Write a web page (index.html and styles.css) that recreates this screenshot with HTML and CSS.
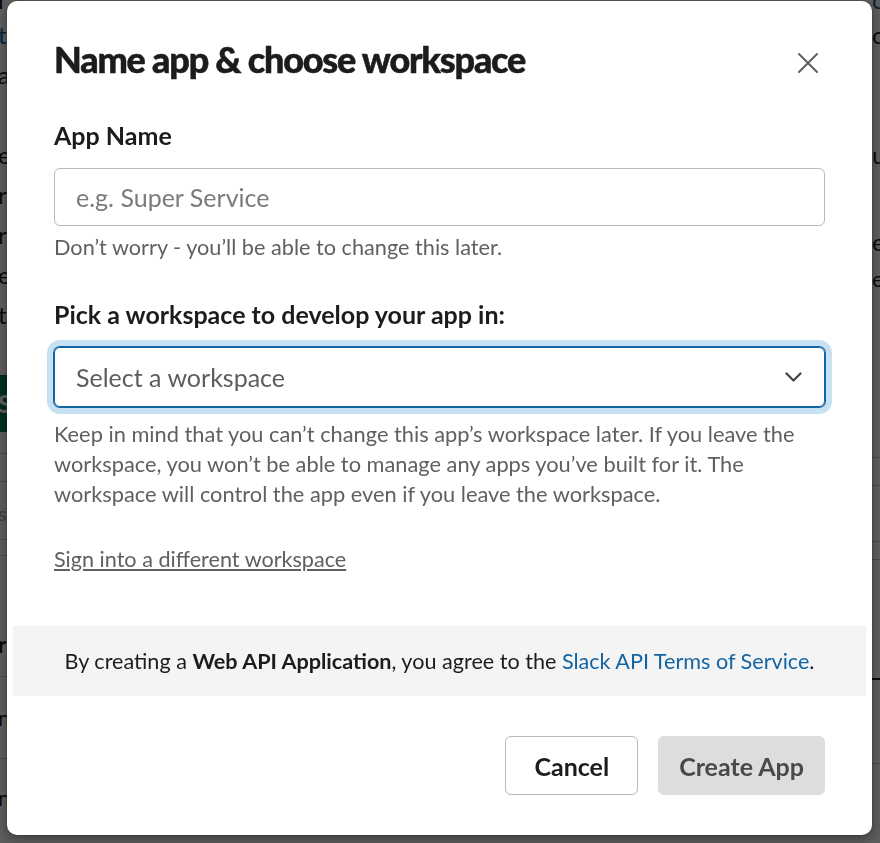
FILE: index.html
```html
<!DOCTYPE html>
<html lang="en">
<head>
    <meta charset="UTF-8">
    <meta name="viewport" content="width=device-width, initial-scale=1.0">
    <title>Create an app</title>
    <link rel="stylesheet" href="styles.css">
</head>
<body>
    <!-- app page behind the dialog, only its edges show -->
    <div class="page">
        <div class="edge edge-left">
            <div class="bg-top">l</div>
            <div class="bg-line bg-link">t</div>
            <div class="bg-line">a</div>
            <div class="bg-line"></div>
            <div class="bg-line">e</div>
            <div class="bg-line">r</div>
            <div class="bg-line">r</div>
            <div class="bg-line">e</div>
            <div class="bg-line">t</div>
            <div class="bg-space-40"></div>
            <div class="bg-button">S</div>
            <div class="bg-cell bg-h22"></div>
            <div class="bg-cell bg-h28"></div>
            <div class="bg-cell bg-h58 bg-muted">s</div>
            <div class="bg-cell bg-h16"></div>
            <div class="bg-space-72"></div>
            <div class="bg-line-sm bg-bold">r</div>
            <div class="bg-cell bg-h15"></div>
            <div class="bg-space-24"></div>
            <div class="bg-line-sm">n</div>
            <div class="bg-cell bg-h24"></div>
            <div class="bg-space-22"></div>
            <div class="bg-line-sm">n</div>
        </div>
        <div class="edge edge-right">
            <div class="bg-top bg-link">c</div>
            <div class="bg-line">c</div>
            <div class="bg-line"></div>
            <div class="bg-line"></div>
            <div class="bg-line">u</div>
            <div class="bg-space-47"></div>
            <div class="bg-line">e</div>
            <div class="bg-line-sm">e</div>
            <div class="bg-space-130"></div>
            <div class="bg-cell bg-h32"></div>
            <div class="bg-cell bg-h28"></div>
            <div class="bg-cell bg-h56"></div>
            <div class="bg-cell bg-h18"></div>
            <div class="bg-cell bg-h120 bg-cell-dark"></div>
            <div class="bg-cell bg-h84"></div>
        </div>
    </div>

    <div class="overlay">
        <div class="modal" role="dialog" aria-labelledby="modal-title">
            <div class="modal-header">
                <h1 class="modal-title" id="modal-title">Name app &amp; choose workspace</h1>
                <button class="close-btn" aria-label="Close">
                    <svg width="22" height="22" viewBox="0 0 22 22" fill="none" stroke="currentColor" stroke-width="2" stroke-linecap="round">
                        <path d="M2 2l18 18M20 2L2 20"/>
                    </svg>
                </button>
            </div>

            <div class="modal-body">
                <label class="field-label" for="app-name">App Name</label>
                <input class="text-input" id="app-name" type="text" placeholder="e.g. Super Service">
                <p class="field-hint">Don’t worry - you’ll be able to change this later.</p>

                <label class="field-label field-label-select">Pick a workspace to develop your app in:</label>
                <div class="select is-focused" tabindex="0">
                    <span>Select a workspace</span>
                    <svg width="17" height="10" viewBox="0 0 17 10" fill="none" stroke="currentColor" stroke-width="2.2" stroke-linecap="round" stroke-linejoin="round">
                        <path d="M1.5 1.5l7 7 7-7"/>
                    </svg>
                </div>
                <p class="field-note">Keep in mind that you can’t change this app’s workspace later. If you leave the workspace, you won’t be able to manage any apps you’ve built for it. The workspace will control the app even if you leave the workspace.</p>

                <a class="alt-link" href="#">Sign into a different workspace</a>
            </div>

            <div class="terms">
                By creating a <strong>Web API Application</strong>, you agree to the <a href="#">Slack API Terms of Service</a>.
            </div>

            <div class="modal-footer">
                <button class="btn btn-cancel">Cancel</button>
                <button class="btn btn-primary" disabled>Create App</button>
            </div>
        </div>
    </div>
</body>
</html>
```

FILE: styles.css
```css
* {
    box-sizing: border-box;
}
body {
    margin: 0;
    font-family: Lato, "Noto Sans", Arial, sans-serif;
    color: #1d1c1d;
    background: #fff;
}

/* page behind the overlay */
.page {
    display: flex;
    justify-content: space-between;
    height: 843px;
    overflow: hidden;
}
.edge {
    width: 9px;
    overflow: hidden;
    font-size: 24px;
    white-space: nowrap;
}
.edge-left {
    margin-left: -2px;
}
.edge-right {
    width: 8px;
}
.bg-top {
    height: 15px;
    line-height: 0;
}
.bg-line {
    height: 40px;
    line-height: 40px;
}
.bg-line-sm {
    height: 34px;
    line-height: 34px;
    font-size: 22px;
}
.bg-link {
    color: #1264a3;
}
.bg-muted {
    color: #aaa;
}
.bg-bold {
    font-weight: 700;
}
.bg-button {
    height: 57px;
    background: #007a5a;
    color: #fff;
    font-weight: 700;
    line-height: 57px;
}
.bg-cell {
    border-bottom: 1px solid #c8c8c8;
    font-size: 20px;
}
.bg-cell-dark {
    border-bottom: 2px solid #1d1c1d;
}
.bg-h15 { height: 15px; }
.bg-h16 { height: 16px; }
.bg-h18 { height: 18px; }
.bg-h22 { height: 22px; }
.bg-h24 { height: 24px; }
.bg-h28 { height: 28px; }
.bg-h32 { height: 32px; }
.bg-h56 { height: 56px; }
.bg-h58 { height: 58px; line-height: 62px; }
.bg-h84 { height: 84px; }
.bg-h120 { height: 120px; }
.bg-space-22 { height: 22px; }
.bg-space-24 { height: 24px; }
.bg-space-40 { height: 40px; }
.bg-space-47 { height: 47px; }
.bg-space-72 { height: 72px; }
.bg-space-130 { height: 130px; }

/* dialog */
.overlay {
    position: fixed;
    inset: 0;
    display: flex;
    align-items: flex-start;
    padding: 1px 0 0 7px;
    background: rgba(0, 0, 0, 0.64);
}
.modal {
    width: 865px;
    height: 834px;
    background: #fff;
    border-radius: 10px;
    box-shadow: 0 0 0 1px rgba(29, 28, 29, 0.13), 0 4px 12px rgba(0, 0, 0, 0.35);
}
.modal-header {
    display: flex;
    align-items: center;
    justify-content: space-between;
    padding: 36px 47px 0 47px;
}
.modal-title {
    margin: 0;
    font-size: 36px;
    font-weight: 900;
    line-height: 44px;
    letter-spacing: -1.2px;
    -webkit-text-stroke: 0.5px #1d1c1d;
}
.close-btn {
    display: flex;
    padding: 0;
    margin-right: 6px;
    margin-top: 7px;
    border: none;
    background: none;
    color: #616061;
    cursor: pointer;
}

.modal-body {
    padding: 0 47px;
}
.field-label {
    display: block;
    margin-top: 39px;
    font-size: 25px;
    font-weight: 700;
    line-height: 30px;
}
.field-label-select {
    margin-top: 37px;
}
.text-input {
    display: block;
    width: 100%;
    height: 58px;
    margin-top: 18px;
    padding: 0 21px;
    border: 1px solid #bbbabb;
    border-radius: 6px;
    font-family: inherit;
    font-size: 25px;
    color: #1d1c1d;
    outline: none;
}
.text-input::placeholder {
    color: #7c7a7c;
}
.field-hint {
    margin: 6px 0 0;
    font-size: 21.7px;
    line-height: 30px;
    color: #616061;
}
.select {
    display: flex;
    align-items: center;
    justify-content: space-between;
    height: 60px;
    margin-top: 18px;
    padding: 0 22px 0 21px;
    border: 1px solid #1264a3;
    border-radius: 6px;
    font-size: 25px;
    color: #5e5d5e;
    outline: none;
}
.select.is-focused {
    box-shadow: 0 0 0 1px #1264a3, 0 0 0 7px #c5e1f2;
}
.select svg {
    color: #454245;
}
.field-note {
    margin: 12px 0 0;
    font-size: 21.8px;
    line-height: 30px;
    color: #616061;
}
.alt-link {
    display: block;
    width: fit-content;
    margin-top: 35px;
    font-size: 21.6px;
    line-height: 30px;
    color: #616061;
    text-decoration: underline;
}

.terms {
    height: 70px;
    margin: 52px 6px 0;
    background: #f4f4f4;
    font-size: 21.6px;
    line-height: 70px;
    text-align: center;
    color: #1d1c1d;
}
.terms strong {
    font-weight: 700;
}
.terms a {
    color: #1264a3;
    text-decoration: none;
}

.modal-footer {
    display: flex;
    justify-content: flex-end;
    gap: 20px;
    margin-top: 40px;
    padding: 0 47px;
}
.btn {
    height: 59px;
    padding: 0 20px;
    border: 1px solid #bbbabb;
    border-radius: 6px;
    background: #fff;
    font-family: inherit;
    font-size: 25px;
    font-weight: 700;
    color: #1d1c1d;
    cursor: pointer;
}
.btn-cancel {
    padding: 0 28px;
}
.btn-primary {
    border-color: #dddddd;
    background: #dddddd;
    color: #4a494a;
}
```
